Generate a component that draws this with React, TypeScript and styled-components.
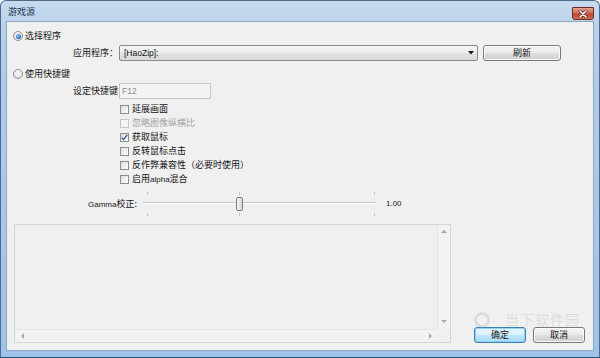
import React from "react";
import styled, { createGlobalStyle } from "styled-components";

const GlobalStyle = createGlobalStyle`
  html, body {
    margin: 0;
    padding: 0;
    background: #ffffff;
  }
  body {
    font-family: "Noto Sans CJK SC", "Liberation Sans", sans-serif;
    font-size: 9px;
    color: #151515;
  }
  * {
    box-sizing: border-box;
  }
`;

const Frame = styled.div`
  position: relative;
  width: 600px;
  height: 358px;
  display: flex;
  flex-direction: column;
  padding: 0 5px 6px 5px;
  border: 1px solid #4f6b8c;
  border-bottom-color: #1f5570;
  border-radius: 6px 6px 0 0;
  background: linear-gradient(180deg, #c6daef 0%, #b3cdea 12%, #a9c7e8 60%, #9fc3ea 100%);
`;

const TitleBar = styled.div`
  height: 20px;
  display: flex;
  align-items: flex-start;
  justify-content: space-between;
  padding-left: 2px;
`;

const Title = styled.span`
  margin-top: 5px;
  font-size: 9px;
  line-height: 11px;
  color: #1f3450;
`;

const CloseButton = styled.div`
  width: 22px;
  height: 13px;
  margin-top: 6px;
  display: flex;
  align-items: center;
  justify-content: center;
  border: 1px solid #6b2a22;
  border-radius: 0 0 3px 3px;
  background: linear-gradient(180deg, #e6a293 0%, #d46b58 45%, #c0432d 55%, #d0715a 100%);
`;

const Client = styled.div`
  position: relative;
  flex: 1;
  display: flex;
  flex-direction: column;
  padding: 7px 8px 7px 6px;
  border: 1px solid #8fa7c4;
  background: #f0f0f0;
`;

const RadioRow = styled.div<{ $top: number }>`
  height: 14px;
  margin-top: ${(p) => p.$top}px;
  display: flex;
  align-items: center;
  gap: 2px;
  line-height: 14px;
`;

const Radio = styled.span<{ $on?: boolean }>`
  width: 10px;
  height: 10px;
  border-radius: 50%;
  border: 1px solid #8b8e92;
  background: radial-gradient(circle at 50% 40%, #fbfbfb 0%, #e3e3e3 70%, #d2d2d2 100%);
  display: flex;
  align-items: center;
  justify-content: center;
  &::after {
    content: "";
    display: ${(p) => (p.$on ? "block" : "none")};
    width: 5px;
    height: 5px;
    border-radius: 50%;
    background: radial-gradient(circle at 40% 35%, #9fd2f7 0%, #2f7ccc 55%, #1a4f92 100%);
  }
`;

const FieldRow = styled.div<{ $top: number }>`
  height: 16px;
  margin-top: ${(p) => p.$top}px;
  margin-left: 60px;
  display: flex;
  align-items: center;
`;

const FieldLabel = styled.span`
  width: 46px;
  line-height: 16px;
  white-space: nowrap;
`;

const Combo = styled.div`
  width: 359px;
  height: 16px;
  display: flex;
  align-items: center;
  justify-content: space-between;
  padding: 0 3px 0 4px;
  border: 1px solid #8a8a8a;
  border-radius: 2px;
  background: linear-gradient(180deg, #f4f4f4 0%, #ececec 45%, #e0e0e0 55%, #d9d9d9 100%);
  font-family: "Liberation Sans", "Noto Sans CJK SC", sans-serif;
  font-size: 8.5px;
`;

const PushButton = styled.div<{ $w: number; $focus?: boolean; $gap?: number }>`
  width: ${(p) => p.$w}px;
  height: 16px;
  margin-left: ${(p) => p.$gap ?? 0}px;
  display: flex;
  align-items: center;
  justify-content: center;
  border: 1px solid ${(p) => (p.$focus ? "#3c7fb1" : "#7a7a7a")};
  border-radius: 3px;
  background: ${(p) =>
    p.$focus
      ? "linear-gradient(180deg, #eaf6fd 0%, #d9f0fc 45%, #bee6fd 55%, #a7d9f5 100%)"
      : "linear-gradient(180deg, #f3f3f3 0%, #ebebeb 45%, #dddddd 55%, #cfcfcf 100%)"};
  box-shadow: ${(p) => (p.$focus ? "inset 0 0 0 1px #8fd3f5" : "inset 0 0 0 1px #fbfbfb")};
  font-size: 9px;
  line-height: 14px;
`;

const TextBox = styled.div`
  width: 92px;
  height: 16px;
  padding-left: 2px;
  border: 1px solid #c8c8c8;
  background: #f3f3f3;
  color: #8d8d8d;
  font-family: "Liberation Sans", sans-serif;
  font-size: 8.5px;
  line-height: 14px;
`;

const CheckList = styled.div`
  margin-top: 3px;
  margin-left: 107px;
  display: flex;
  flex-direction: column;
`;

const CheckRow = styled.div<{ $disabled?: boolean }>`
  height: 14px;
  display: flex;
  align-items: center;
  gap: 3px;
  line-height: 14px;
  color: ${(p) => (p.$disabled ? "#a3a3a3" : "#151515")};
`;

const Box = styled.span<{ $disabled?: boolean }>`
  width: 9px;
  height: 9px;
  display: flex;
  align-items: center;
  justify-content: center;
  border: 1px solid ${(p) => (p.$disabled ? "#c6c6c6" : "#8b8e92")};
  background: ${(p) =>
    p.$disabled ? "#f4f4f4" : "linear-gradient(135deg, #dcdcdc 0%, #f2f2f2 60%, #fafafa 100%)"};
`;

const Latin = styled.span`
  font-family: "Liberation Sans", sans-serif;
  font-size: 8px;
`;

const GammaRow = styled.div`
  height: 26px;
  margin-top: 4px;
  margin-left: 75px;
  display: flex;
  align-items: center;
`;

const GammaLabel = styled.span`
  width: 55px;
  white-space: nowrap;
`;

const Slider = styled.div`
  position: relative;
  width: 234px;
  height: 26px;
`;

const Track = styled.div`
  position: absolute;
  left: 0;
  right: 0;
  top: 12px;
  height: 2px;
  border-top: 1px solid #c9c9c9;
  border-bottom: 1px solid #ffffff;
`;

const Tick = styled.span<{ $bottom?: boolean }>`
  position: absolute;
  width: 1px;
  height: 3px;
  top: ${(p) => (p.$bottom ? "23px" : "2px")};
  background: #c4c4c4;
`;

const Thumb = styled.span`
  position: absolute;
  top: 7px;
  width: 7px;
  height: 14px;
  border: 1px solid #7b7b7b;
  border-radius: 2px;
  background: linear-gradient(90deg, #f6f6f6 0%, #e6e6e6 50%, #d6d6d6 100%);
`;

const GammaValue = styled.span`
  margin-left: 9px;
  font-family: "Liberation Sans", sans-serif;
  font-size: 8px;
`;

const Bottom = styled.div`
  margin-top: 8px;
  height: 119px;
  display: flex;
  align-items: flex-end;
  justify-content: space-between;
  padding-left: 1px;
`;

const ListBox = styled.div`
  width: 437px;
  height: 119px;
  display: grid;
  grid-template-columns: 1fr 13px;
  grid-template-rows: 1fr 13px;
  border: 1px solid #d6d6d6;
  background: #f0f0f0;
`;

const ScrollBar = styled.div<{ $vertical?: boolean }>`
  display: flex;
  flex-direction: ${(p) => (p.$vertical ? "column" : "row")};
  align-items: center;
  justify-content: space-between;
  padding: ${(p) => (p.$vertical ? "4px 0 5px" : "0 4px 0 5px")};
  background: #f2f2f2;
  border-${(p) => (p.$vertical ? "left" : "top")}: 1px solid #e3e3e3;
`;

const Corner = styled.div`
  background: #f0f0f0;
`;

const ButtonGroup = styled.div`
  display: flex;
  gap: 7px;
`;

const Watermark = styled.div`
  position: absolute;
  left: 466px;
  top: 290px;
  height: 15px;
  display: flex;
  align-items: center;
  gap: 14px;
  color: rgba(150, 150, 150, 0.22);
  font-size: 14px;
  line-height: 15px;
  letter-spacing: 1px;
  pointer-events: none;
`;

const Arrow = ({ dir }: { dir: "up" | "down" | "left" | "right" }) => {
  const pts = {
    up: "0,4 3,1 6,4",
    down: "0,1 3,4 6,1",
    left: "4,0 1,3 4,6",
    right: "1,0 4,3 1,6",
  }[dir];
  const vertical = dir === "up" || dir === "down";
  return (
    <svg width={vertical ? 6 : 5} height={vertical ? 5 : 6} viewBox={vertical ? "0 0 6 5" : "0 0 5 6"}>
      <polygon points={pts} fill="#a8a8a8" />
    </svg>
  );
};

const options = [
  { label: "延展画面" },
  { label: "忽略图像纵横比", disabled: true },
  { label: "获取鼠标", checked: true },
  { label: "反转鼠标点击" },
  { label: "反作弊兼容性（必要时使用）" },
  { label: "启用", latin: "alpha", rest: "混合" },
];

export default function App() {
  const thumbLeft = 96;
  return (
    <>
      <GlobalStyle />
      <Frame>
        <TitleBar>
          <Title>游戏源</Title>
          <CloseButton>
            <svg width="10" height="8" viewBox="0 0 10 8">
              <path d="M2 1 L8 7 M8 1 L2 7" stroke="#5a1f18" strokeWidth="3" strokeLinecap="round" />
              <path d="M2 1 L8 7 M8 1 L2 7" stroke="#ffffff" strokeWidth="1.6" strokeLinecap="round" />
            </svg>
          </CloseButton>
        </TitleBar>
        <Client>
          <RadioRow $top={0}>
            <Radio $on />
            <span>选择程序</span>
          </RadioRow>
          <FieldRow $top={2}>
            <FieldLabel>应用程序：</FieldLabel>
            <Combo>
              <span>[HaoZip]:</span>
              <svg width="6" height="4" viewBox="0 0 6 4">
                <polygon points="0,0 6,0 3,3.5" fill="#1a1a1a" />
              </svg>
            </Combo>
            <PushButton $w={78} $gap={5}>
              刷新
            </PushButton>
          </FieldRow>
          <RadioRow $top={6}>
            <Radio />
            <span>使用快捷键</span>
          </RadioRow>
          <FieldRow $top={2}>
            <FieldLabel>设定快捷键</FieldLabel>
            <TextBox>F12</TextBox>
          </FieldRow>
          <CheckList>
            {options.map((o) => (
              <CheckRow key={o.label} $disabled={o.disabled}>
                <Box $disabled={o.disabled}>
                  {o.checked && (
                    <svg width="7" height="7" viewBox="0 0 7 7">
                      <path d="M0.8 3.6 L2.6 5.6 L6.3 0.8" stroke="#2c4a86" strokeWidth="1.3" fill="none" />
                    </svg>
                  )}
                </Box>
                <span>
                  {o.label}
                  {o.latin && <Latin>{o.latin}</Latin>}
                  {o.rest}
                </span>
              </CheckRow>
            ))}
          </CheckList>
          <GammaRow>
            <GammaLabel>
              <Latin>Gamma</Latin>校正:
            </GammaLabel>
            <Slider>
              <Track />
              {[4, 96, 231].map((x) => (
                <React.Fragment key={x}>
                  <Tick style={{ left: x }} />
                  <Tick $bottom style={{ left: x }} />
                </React.Fragment>
              ))}
              <Thumb style={{ left: thumbLeft - 3 }} />
            </Slider>
            <GammaValue>1.00</GammaValue>
          </GammaRow>
          <Bottom>
            <ListBox>
              <div />
              <ScrollBar $vertical>
                <Arrow dir="up" />
                <Arrow dir="down" />
              </ScrollBar>
              <ScrollBar>
                <Arrow dir="left" />
                <Arrow dir="right" />
              </ScrollBar>
              <Corner />
            </ListBox>
            <ButtonGroup>
              <PushButton $w={52} $focus>
                确定
              </PushButton>
              <PushButton $w={52}>取消</PushButton>
            </ButtonGroup>
          </Bottom>
          <Watermark>
            <svg width="18" height="18" viewBox="0 0 18 18">
              <circle cx="9" cy="9" r="6.5" fill="none" stroke="rgba(150,150,150,0.25)" strokeWidth="2.5" />
            </svg>
            <span>当下软件园</span>
          </Watermark>
        </Client>
      </Frame>
    </>
  );
}
